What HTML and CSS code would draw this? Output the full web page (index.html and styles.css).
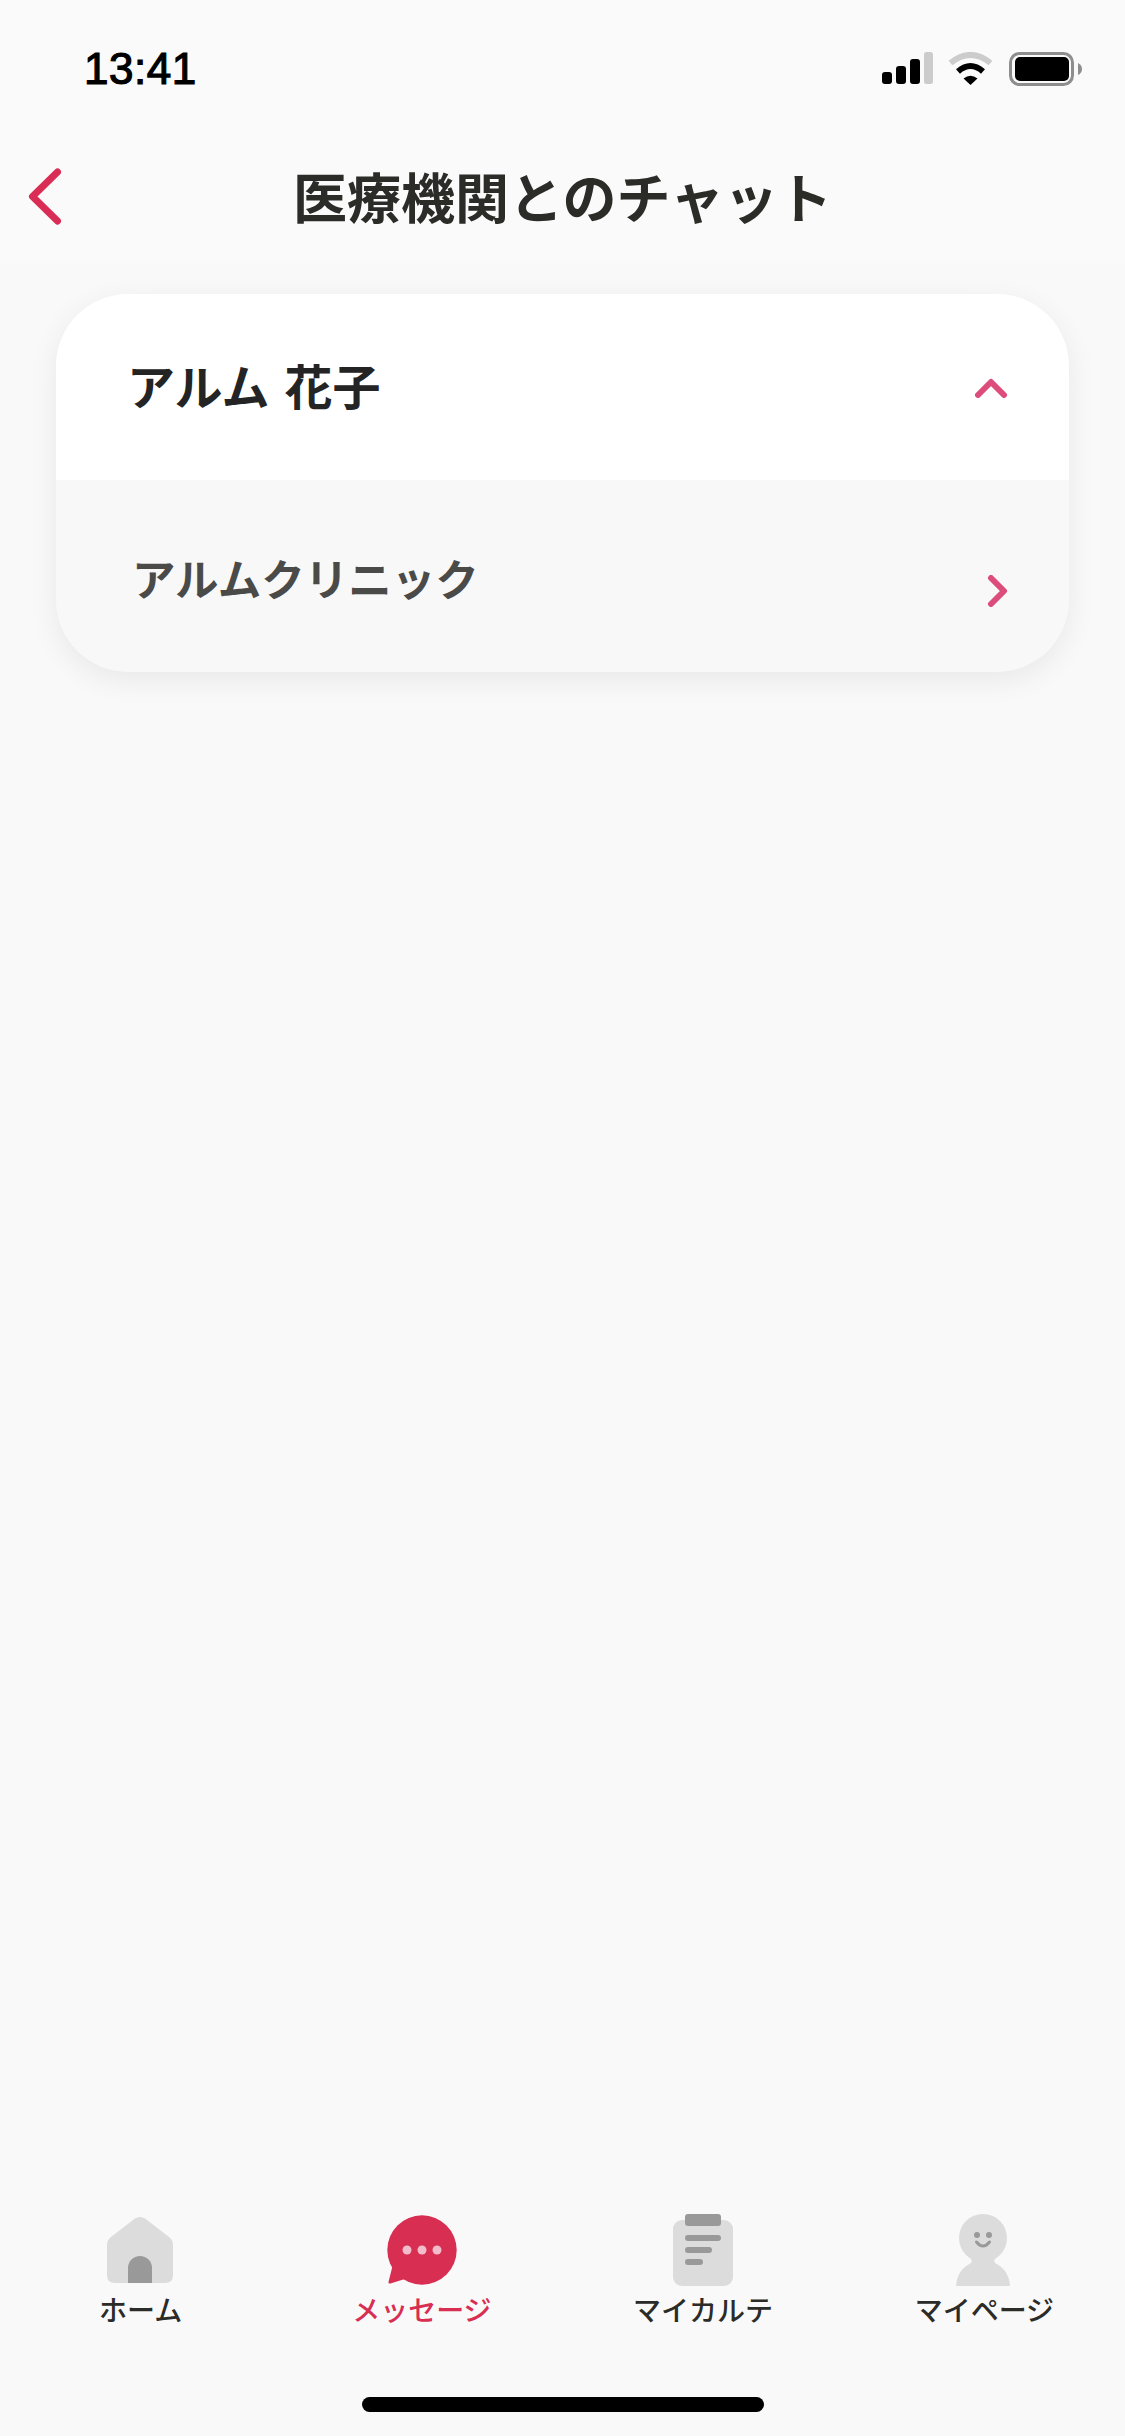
FILE: index.html
```html
<!DOCTYPE html>
<html lang="ja">
<head>
    <meta charset="UTF-8">
    <meta name="viewport" content="width=device-width, initial-scale=1.0">
    <title>医療機関とのチャット</title>
    <link rel="stylesheet" href="styles.css">
</head>
<body>
    <div class="screen">
        <div class="status-bar">
            <span class="time">13:41</span>
            <div class="status-icons">
                <svg class="signal" width="51" height="32" viewBox="0 0 51 32">
                    <rect x="0" y="20" width="10" height="12" rx="3"/>
                    <rect x="14" y="14" width="10" height="18" rx="3"/>
                    <rect x="28" y="7" width="10" height="25" rx="3"/>
                    <rect x="42" y="0" width="9" height="32" rx="2.5" fill="#cccccc"/>
                </svg>
                <svg class="wifi" width="45" height="33" viewBox="0 0 45 33">
                    <path d="M2.5 11Q22.5 -5 42.5 11" fill="none" stroke="#cccccc" stroke-width="6"/>
                    <path d="M10 19.5Q22.5 8.500 35 19.5" fill="none" stroke="#000" stroke-width="6"/>
                    <path d="M15.500 26.500Q22.500 21 29.500 26.500L22.500 33Z"/>
                </svg>
                <svg class="battery" width="73" height="34" viewBox="0 0 73 34">
                    <rect x="1.500" y="1.500" width="62" height="31" rx="9" fill="none" stroke="#8e8e8e" stroke-width="3"/>
                    <rect x="6" y="5" width="54" height="24" rx="5"/>
                    <path d="M69 11Q73 13 73 17Q73 21 69 23Z" fill="#8e8e8e"/>
                </svg>
            </div>
        </div>

        <header class="header">
            <a class="back" href="#">
                <svg width="34" height="57" viewBox="0 0 34 57">
                    <path d="M29.500 4L4.500 28.500L29.500 53" fill="none" stroke="#d92d55" stroke-width="7" stroke-linecap="round" stroke-linejoin="round"/>
                </svg>
            </a>
            <h1 class="title">医療機関とのチャット</h1>
        </header>

        <section class="card">
            <div class="card-head">
                <span class="patient-name">アルム 花子</span>
                <svg class="chevron head-arrow" width="34" height="20" viewBox="0 0 34 20">
                    <path d="M4 17L17 4L30 17" fill="none" stroke="#dc4d7c" stroke-width="6" stroke-linecap="round" stroke-linejoin="round"/>
                </svg>
            </div>
            <div class="clinic-row">
                <span class="clinic-name">アルムクリニック</span>
                <svg class="chevron clinic-arrow" width="21" height="32" viewBox="0 0 21 32">
                    <path d="M4 3L17 16L4 29" fill="none" stroke="#dc4d7c" stroke-width="6" stroke-linecap="round" stroke-linejoin="round"/>
                </svg>
            </div>
        </section>

        <div class="spacer"></div>

        <nav class="tabs">
            <a class="tab" href="#">
                <svg width="72" height="72" viewBox="0 0 72 72">
                    <path d="M30 4.500Q35 1.500 40 4.500L64 23Q68 26 68 31V61Q68 69 60 69H10Q2 69 2 61V31Q2 26 6 23Z" fill="#dcdcdc"/>
                    <path d="M23 69V54A12 12 0 0 1 47 54V69Z" fill="#999999"/>
                </svg>
                <span>ホーム</span>
            </a>
            <a class="tab active" href="#">
                <svg width="72" height="72" viewBox="0 0 72 72">
                    <circle cx="36" cy="36" r="34.700" fill="#d72e52"/>
                    <path d="M7 50L2.500 68Q2 70 4.500 69.500L22 64Z" fill="#d72e52"/>
                    <circle cx="21" cy="36" r="4.500" fill="#f3bcca"/>
                    <circle cx="36" cy="36" r="4.500" fill="#f3bcca"/>
                    <circle cx="51" cy="36" r="4.500" fill="#f3bcca"/>
                </svg>
                <span>メッセージ</span>
            </a>
            <a class="tab" href="#">
                <svg width="72" height="72" viewBox="0 0 72 72">
                    <rect x="6" y="6" width="60" height="66" rx="9" fill="#dcdcdc"/>
                    <rect x="18" y="0" width="36" height="12" rx="3" fill="#999999"/>
                    <rect x="18" y="21" width="36" height="6" rx="3" fill="#999999"/>
                    <rect x="18" y="33" width="27" height="6" rx="3" fill="#999999"/>
                    <rect x="18" y="45" width="18" height="6" rx="3" fill="#999999"/>
                </svg>
                <span>マイカルテ</span>
            </a>
            <a class="tab" href="#">
                <svg width="72" height="72" viewBox="0 0 72 72">
                    <circle cx="35" cy="24" r="24" fill="#dcdcdc"/>
                    <path d="M21 42Q25 46 23 49Q9 56 8 72H62Q61 56 47 49Q45 46 49 42Z" fill="#dcdcdc"/>
                    <circle cx="29" cy="21" r="3" fill="#999999"/>
                    <circle cx="41" cy="21" r="3" fill="#999999"/>
                    <path d="M28.500 28Q35 36 41.500 28" fill="none" stroke="#999999" stroke-width="3" stroke-linecap="round"/>
                </svg>
                <span>マイページ</span>
            </a>
        </nav>

        <div class="home-bar"><div class="home-indicator"></div></div>
    </div>
</body>
</html>
```

FILE: styles.css
```css
html, body {
    margin: 0;
    padding: 0;
}
body {
    background-color: #f9f9f9;
    font-family: "Noto Sans CJK JP", "Liberation Sans", sans-serif;
}
a {
    text-decoration: none;
    color: inherit;
}
.screen {
    width: 1125px;
    height: 2436px;
    display: flex;
    flex-direction: column;
    overflow: hidden;
}
.status-bar {
    height: 132px;
    box-sizing: border-box;
    padding: 43px 43px 0 84px;
    display: flex;
    justify-content: space-between;
    align-items: flex-start;
    background-color: #fafafa;
}
.time {
    font-family: "Liberation Sans", sans-serif;
    font-size: 44px;
    font-weight: 400;
    -webkit-text-stroke: 1.2px #000;
    letter-spacing: 0.5px;
    line-height: 52px;
    color: #000;
}
.status-icons {
    display: flex;
    align-items: flex-start;
    gap: 15px;
    padding-top: 9px;
}
.battery {
    margin-left: 1px;
}
.header {
    height: 132px;
    box-sizing: border-box;
    padding: 0 28px 4px;
    display: grid;
    grid-template-columns: 34px 1fr 34px;
    align-items: center;
    background-color: #fafafa;
}
.back {
    display: flex;
}
.title {
    grid-column: 2;
    margin: 0;
    text-align: center;
    font-size: 54px;
    font-weight: 700;
    line-height: 60px;
    color: #2b2b28;
}
.card {
    margin: 30px 56px 0;
    height: 378px;
    border-radius: 72px;
    overflow: hidden;
    background-color: #f8f8f8;
    box-shadow: 0 8px 30px rgba(0, 0, 0, 0.07);
    display: flex;
    flex-direction: column;
}
.card-head {
    height: 186px;
    flex: none;
    padding: 0 61px 0 71px;
    display: flex;
    justify-content: space-between;
    align-items: center;
    background-color: #fff;
}
.patient-name {
    font-size: 48px;
    font-weight: 700;
    line-height: 60px;
    word-spacing: 4px;
    margin-bottom: 6px;
    color: #242424;
}
.head-arrow {
    margin-top: 2px;
}
.clinic-row {
    flex: 1;
    padding: 68px 61px 0 76px;
    display: flex;
    justify-content: space-between;
    align-items: flex-start;
}
.clinic-name {
    font-size: 43.5px;
    font-weight: 700;
    line-height: 60px;
    color: #4a4a48;
}
.clinic-arrow {
    margin-top: 27px;
}
.spacer {
    flex: 1;
}
.tabs {
    display: grid;
    grid-template-columns: repeat(4, 1fr);
}
.tab {
    display: flex;
    flex-direction: column;
    align-items: center;
    gap: 3px;
    font-size: 28px;
    font-weight: 500;
    line-height: 40px;
    color: #2b2b28;
}
.tab.active {
    color: #d72e52;
}
.home-bar {
    padding: 68px 0 24px;
    display: flex;
    justify-content: center;
}
.home-indicator {
    width: 402px;
    height: 15px;
    border-radius: 8px;
    background-color: #000;
}
```
